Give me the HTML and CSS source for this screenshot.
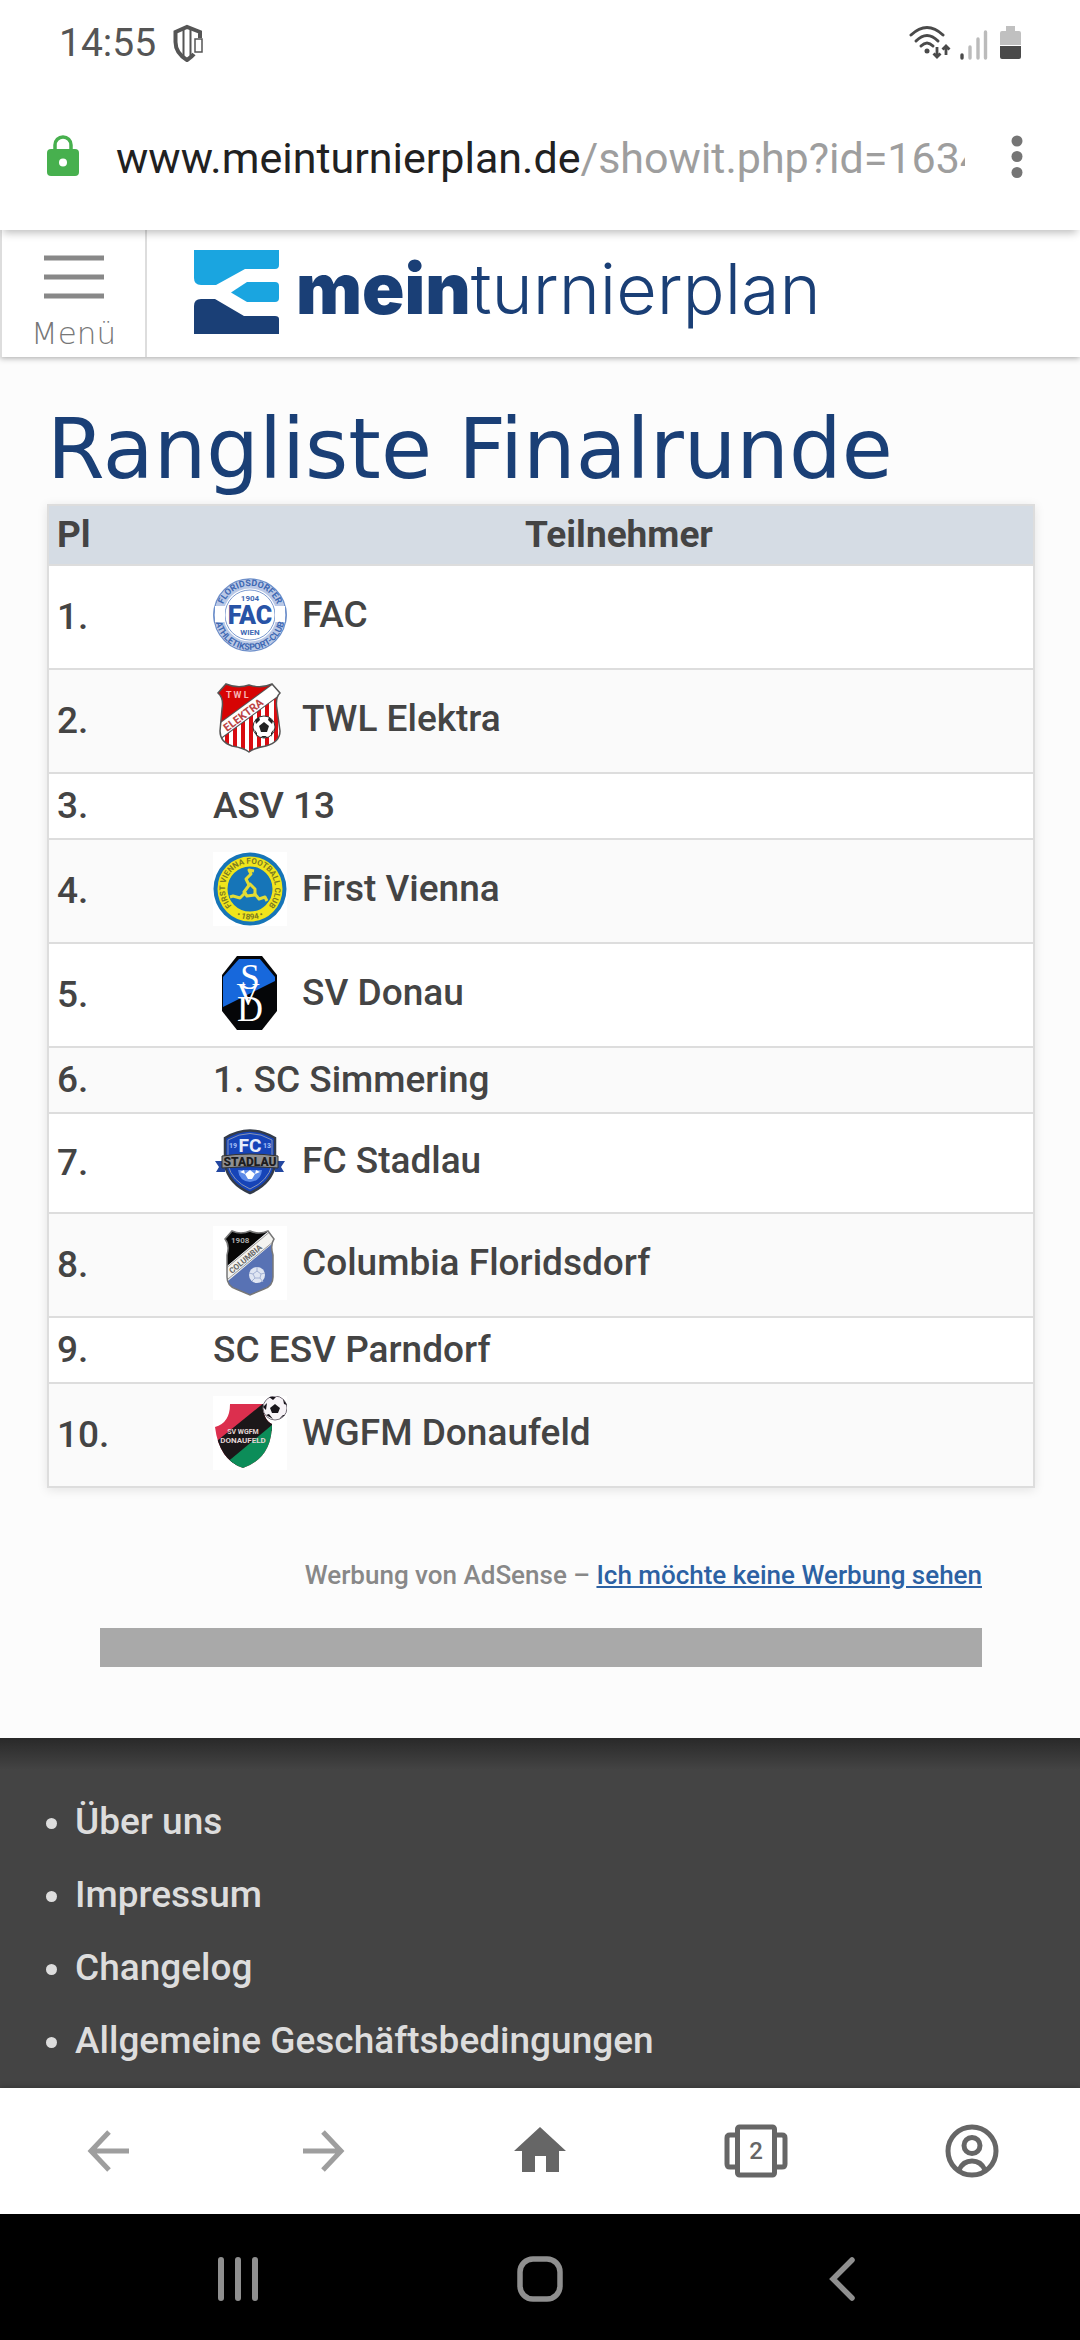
FILE: index.html
```html
<!DOCTYPE html>
<html lang="de">
<head>
    <meta charset="UTF-8">
    <meta name="viewport" content="width=device-width, initial-scale=1.0">
    <title>Rangliste Finalrunde</title>
    <link rel="stylesheet" href="styles.css">
</head>
<body>
    <div class="status-bar">
        <span class="clock">14:55</span>
        <svg class="shield" width="30" height="38" viewBox="0 0 30 38">
            <path d="M27 14V8L14 3 2.500 8v10c0 8 5 14 11.500 18 3-2 5-3.500 7-6" fill="none" stroke="#555" stroke-width="4"/>
            <path d="M10.500 5v28M17.500 5v28" stroke="#555" stroke-width="2"/>
            <rect x="22" y="15" width="7" height="13" fill="#fff" stroke="#555" stroke-width="1.500"/>
        </svg>
        <div class="status-icons">
            <svg width="42" height="36" viewBox="0 0 42 36">
                <g fill="none" stroke="#4a4a4a" stroke-width="3" stroke-linecap="round">
                    <path d="M2 10Q18 -5 34 10"/>
                    <path d="M7 16Q18 5 29 16"/>
                    <path d="M12 21Q18 15 24 21"/>
                </g>
                <circle cx="18" cy="26" r="2.500" fill="#4a4a4a"/>
                <path d="M28 22v10M24.500 28.500 28 32l3.500-3.500M37 30V21M33.500 24.500 37 21l3.500 3.500" fill="none" stroke="#4a4a4a" stroke-width="2.800"/>
            </svg>
            <svg width="28" height="36" viewBox="0 0 28 36">
                <g stroke="#bbb" stroke-width="3.400" stroke-linecap="round">
                    <path d="M2 30v3" stroke="#4a4a4a"/>
                    <path d="M10 22v11M18 14v19M25.500 7v26"/>
                </g>
            </svg>
            <svg class="battery" width="21" height="36" viewBox="0 0 21 36">
                <path d="M6 1h9v5h4q2 0 2 2v12H0V8q0-2 2-2h4z" fill="#c0c0c0"/>
                <path d="M0 21h21v11q0 2-2 2H2q-2 0-2-2z" fill="#4a4a4a"/>
            </svg>
        </div>
    </div>

    <div class="address-bar">
        <svg width="32" height="48" viewBox="0 0 32 48">
            <path d="M8 18V11a8 8 0 0 1 16 0v7" fill="none" stroke="#47b04e" stroke-width="3.500"/>
            <rect x="0" y="15" width="32" height="27" rx="4" fill="#47b04e"/>
            <circle cx="16" cy="28.500" r="4" fill="#fff"/>
        </svg>
        <button class="url" type="button"><span class="host">www.meinturnierplan.de</span>/showit.php?id=1634</button>
        <button class="more" type="button" aria-label="Mehr">
            <svg width="12" height="48" viewBox="0 0 12 48">
                <g fill="#757575">
                    <circle cx="6" cy="7" r="5.500"/>
                    <circle cx="6" cy="22.500" r="5.500"/>
                    <circle cx="6" cy="38.500" r="5.500"/>
                </g>
            </svg>
        </button>
    </div>

    <div class="page">
        <header class="site-header">
            <button class="menu" type="button">
                <svg width="60" height="44" viewBox="0 0 60 44">
                    <path d="M0 3h60M0 22h60M0 41h60" stroke="#888" stroke-width="5"/>
                </svg>
                Menü
            </button>
            <a class="logo" href="#">
                <svg width="85" height="84" viewBox="0 0 85 84">
                    <path d="M0 0h85v15q0 4-4 4H51L22 35H7q-7 0-7-7z" fill="#1aa5e0"/>
                    <path d="M37 42.500 53 32h28q4 0 4 4v12q0 4-4 4H53z" fill="#1aa5e0"/>
                    <path d="M0 56q0-7 7-7h14l29 17h31q4 0 4 3v15H0z" fill="#1a3f76"/>
                </svg>
                <span class="logo-text"><b>mein</b>turnierplan</span>
            </a>
        </header>

        <main class="content">
            <h1>Rangliste Finalrunde</h1>
            <table class="ranking">
                <thead>
                    <tr>
                        <th class="place">Pl</th>
                        <th class="participant">Teilnehmer</th>
                    </tr>
                </thead>
                <tbody>
                    <tr>
                        <td>1.</td>
                        <td>
                            <div class="team">
                                <svg width="74" height="74" viewBox="0 0 74 74">
                                    <defs>
                                        <path id="facTop" d="M8 37a29 29 0 0 1 58 0"/>
                                        <path id="facBottom" d="M2 37a35 35 0 0 0 70 0"/>
                                    </defs>
                                    <circle cx="37" cy="37" r="36" fill="#fff" stroke="#6d8fca" stroke-width="1.500"/>
                                    <circle cx="37" cy="37" r="31" fill="none" stroke="#b9c8e6" stroke-width="9"/>
                                    <circle cx="37" cy="37" r="25" fill="#fff" stroke="#7d9bd0" stroke-width="1"/>
                                    <path d="M2 28h10v16H2zM62 28h10v16H62z" fill="#fff"/>
                                    <path d="M1.500 29a36 36 0 0 0 0 16M72.500 29a36 36 0 0 1 0 16" fill="none" stroke="#6d8fca"/>
                                    <g fill="#3f69b3" font-family="Roboto, sans-serif" font-weight="700" text-anchor="middle">
                                        <text font-size="9"><textPath href="#facTop" startOffset="50%">FLORIDSDORFER</textPath></text>
                                        <text font-size="9"><textPath href="#facBottom" startOffset="50%">ATHLETIKSPORT-CLUB</textPath></text>
                                        <text x="37" y="23" font-size="8">1904</text>
                                        <text x="37" y="57" font-size="8">WIEN</text>
                                        <text x="37" y="46" font-size="25" font-weight="900" fill="#2853a6">FAC</text>
                                    </g>
                                </svg>
                                FAC
                            </div>
                        </td>
                    </tr>
                    <tr>
                        <td>2.</td>
                        <td>
                            <div class="team">
                                <svg width="74" height="74" viewBox="0 0 74 74">
                                    <clipPath id="twl"><path d="M13 2q12 5 23 1 12 4 23-1l8 9q-5 5-3 16l3 22q0 11-14 15-12 2-17 6-5-4-17-6Q7 60 7 49l2-22q2-11-4-16z"/></clipPath>
                                    <g clip-path="url(#twl)">
                                        <path d="M0 0h74v74H0z" fill="#fff"/>
                                        <path d="M14 40v34M22 34v40M30 30v44M38 22v52M46 18v56M54 12v62M63 8v66" stroke="#d90b10" stroke-width="4"/>
                                        <path d="M0 0h64L0 48z" fill="#d60404"/>
                                        <path d="M3 52 68 4" stroke="#555" stroke-width="14"/>
                                        <path d="M3 52 68 4" stroke="#fff" stroke-width="12"/>
                                    </g>
                                    <path d="M13 2q12 5 23 1 12 4 23-1l8 9q-5 5-3 16l3 22q0 11-14 15-12 2-17 6-5-4-17-6Q7 60 7 49l2-22q2-11-4-16z" fill="none" stroke="#555" stroke-width="1.500"/>
                                    <g font-family="Roboto, sans-serif" font-weight="700">
                                        <text x="13" y="16" font-size="9" fill="#f8b5b5">T W L</text>
                                        <text x="14" y="50" font-size="11" fill="#b44" transform="rotate(-37 14 50)">ELEKTRA</text>
                                    </g>
                                    <circle cx="51" cy="45" r="11" fill="#fff" stroke="#333"/>
                                    <path d="m51 40 5 4-2 6h-6l-2-6zM42 38l4-3 1 3-4 4zM56 35l4 4-1 3-4-4zM41 47l3 4v4zM61 47l-3 4v4zM48 54h6l-3 2z" fill="#222"/>
                                </svg>
                                TWL Elektra
                            </div>
                        </td>
                    </tr>
                    <tr>
                        <td>3.</td>
                        <td>ASV 13</td>
                    </tr>
                    <tr>
                        <td>4.</td>
                        <td>
                            <div class="team">
                                <svg width="74" height="74" viewBox="0 0 74 74">
                                    <defs>
                                        <path id="fvcRing" d="M20 55a25 25 0 1 1 34 0"/>
                                        <path id="fvcYear" d="M18 61a31 31 0 0 0 38 0"/>
                                    </defs>
                                    <path d="M0 0h74v74H0z" fill="#fff"/>
                                    <circle cx="37" cy="37" r="36.500" fill="#1675b8"/>
                                    <circle cx="37" cy="37" r="27.500" fill="none" stroke="#f0e51c" stroke-width="10"/>
                                    <g fill="#7c7a22" font-family="Roboto, sans-serif" font-size="8" font-weight="700" text-anchor="middle">
                                        <text><textPath href="#fvcRing" startOffset="50%">FIRST VIENNA FOOTBALL CLUB</textPath></text>
                                        <text><textPath href="#fvcYear" startOffset="50%">• 1894 •</textPath></text>
                                    </g>
                                    <g fill="none" stroke="#e3dc35" stroke-width="3" stroke-linejoin="round">
                                        <path d="M36 33 33 27l5-5-2-4 5 1"/>
                                        <path d="M33 40 27 46l-7-2-3 1"/>
                                        <path d="m41 41 5 6 6-2 2 4"/>
                                        <path d="M37 32l5 5v6l-8 1-3-4z"/>
                                    </g>
                                </svg>
                                First Vienna
                            </div>
                        </td>
                    </tr>
                    <tr>
                        <td>5.</td>
                        <td>
                            <div class="team">
                                <svg width="74" height="74" viewBox="0 0 74 74">
                                    <path d="M24 0h25l15 19v36L49 74H24L9 55V19z" fill="#050608"/>
                                    <path d="M26 3h21l15 18v4L10 51V21z" fill="#1768dc"/>
                                    <g fill="#fff" font-family="Liberation Serif, serif" text-anchor="middle">
                                        <text x="37" y="33" font-size="35">S</text>
                                        <text x="35" y="49" font-size="32">V</text>
                                        <text x="37" y="65" font-size="36">D</text>
                                    </g>
                                </svg>
                                SV Donau
                            </div>
                        </td>
                    </tr>
                    <tr>
                        <td>6.</td>
                        <td>1. SC Simmering</td>
                    </tr>
                    <tr>
                        <td>7.</td>
                        <td>
                            <div class="team">
                                <svg width="74" height="70" viewBox="0 0 74 70">
                                    <path d="M12 12Q37-3 62 12v27Q58 58 37 67 16 58 12 39z" fill="#1644b8" stroke="#333b4a" stroke-width="2.500"/>
                                    <path d="M15 14Q37 1 59 14v25Q55 55 37 63 19 55 15 39z" fill="none" stroke="#8794b5" stroke-width="1"/>
                                    <path d="M2 35h10v11H3l3-5zM72 35H62v11h9l-3-5z" fill="#2347a0"/>
                                    <path d="M25 44h24q-1 11-12 12-11-1-12-12z" fill="#5d8be8"/>
                                    <path d="m37 44 5 4-3 5h-4l-3-5zM27 46l4-2 1 4zM47 46l-4-2-1 4z" fill="#fff"/>
                                    <path d="M9 30q28-4 56 0v12q-28-3-56 0z" fill="#8e8f91" stroke="#333" stroke-width="1"/>
                                    <g font-family="Roboto, sans-serif" font-weight="900" text-anchor="middle">
                                        <text x="37" y="40" font-size="12" fill="#1d1d1f">STADLAU</text>
                                        <text x="37" y="26" font-size="19" font-weight="700" fill="#e8eefc">FC</text>
                                        <text x="20" y="22" font-size="7" fill="#9db8f2">19</text>
                                        <text x="54" y="22" font-size="7" fill="#9db8f2">13</text>
                                    </g>
                                </svg>
                                FC Stadlau
                            </div>
                        </td>
                    </tr>
                    <tr>
                        <td>8.</td>
                        <td>
                            <div class="team">
                                <svg width="74" height="74" viewBox="0 0 74 74">
                                    <path d="M0 0h74v74H0z" fill="#fff"/>
                                    <clipPath id="columbia"><path d="M19 5q9 4 18 0 9 4 18 0l6 8q-4 6-1 16v22q0 9-9 12l-14 6-14-6q-9-3-9-12V29q3-10-2-16z"/></clipPath>
                                    <g clip-path="url(#columbia)">
                                        <path d="M0 0h74v74H0z" fill="#5872b4"/>
                                        <path d="M0 0h62L0 52z" fill="#070707"/>
                                        <path d="M8 53 65 5" stroke="#f3f3f0" stroke-width="12"/>
                                        <path d="M11 44 59 4M15 53 66 11" stroke="#9a9a9a" stroke-width="1"/>
                                    </g>
                                    <path d="M19 5q9 4 18 0 9 4 18 0l6 8q-4 6-1 16v22q0 9-9 12l-14 6-14-6q-9-3-9-12V29q3-10-2-16z" fill="none" stroke="#777" stroke-width="1.500"/>
                                    <g font-family="Roboto, sans-serif" font-weight="700">
                                        <text x="18" y="17" font-size="8" fill="#aaa">1908</text>
                                        <text x="19" y="48" font-size="8" fill="#666" transform="rotate(-40 19 48)">COLUMBIA</text>
                                    </g>
                                    <circle cx="44" cy="49" r="8" fill="#dfe5f2"/>
                                    <path d="m44 45 4 3-1 4h-5l-2-4zM44 41v4M52 47l-4 1M50 56l-3-4M39 55l3-3M36 47l4 1" fill="none" stroke="#a4b2d4"/>
                                </svg>
                                Columbia Floridsdorf
                            </div>
                        </td>
                    </tr>
                    <tr>
                        <td>9.</td>
                        <td>SC ESV Parndorf</td>
                    </tr>
                    <tr>
                        <td>10.</td>
                        <td>
                            <div class="team">
                                <svg width="74" height="74" viewBox="0 0 74 74">
                                    <path d="M0 0h74v74H0z" fill="#fff"/>
                                    <clipPath id="wgfm"><path d="M17 8h33q0 16 9 20 0 34-29 44Q6 64 2 31q15-4 15-23z"/></clipPath>
                                    <g clip-path="url(#wgfm)">
                                        <path d="M0 0h74v74H0z" fill="#dc2f4e"/>
                                        <path d="M52 6 0 48v26h20l45-46V6z" fill="#1b1719"/>
                                        <path d="M65 24 12 68l10 6h43z" fill="#0c8d59"/>
                                    </g>
                                    <g fill="#e2d5d5" font-family="Roboto, sans-serif" font-weight="700" text-anchor="middle">
                                        <text x="30" y="38" font-size="7">SV WGFM</text>
                                        <text x="30" y="47" font-size="8">DONAUFELD</text>
                                    </g>
                                    <circle cx="62" cy="12" r="12" fill="#f7f3f7" stroke="#77707a"/>
                                    <path d="m62 8 5 4-2 5h-6l-2-5zM56 1h7l-3 3zM50 11l4-4-1 7zM53 19l3-1 4 5zM66 23l4-4h2zM70 3l4 6-3-1z" fill="#17131a"/>
                                </svg>
                                WGFM Donaufeld
                            </div>
                        </td>
                    </tr>
                </tbody>
            </table>

            <div class="ad">
                <p>Werbung von AdSense – <a href="#">Ich möchte keine Werbung sehen</a></p>
                <div class="ad-space"></div>
            </div>
        </main>

        <footer class="site-footer">
            <ul>
                <li><a href="#">Über uns</a></li>
                <li><a href="#">Impressum</a></li>
                <li><a href="#">Changelog</a></li>
                <li><a href="#">Allgemeine Geschäftsbedingungen</a></li>
            </ul>
        </footer>
    </div>

    <nav class="browser-nav">
        <button type="button" aria-label="Zurück">
            <svg width="64" height="54" viewBox="0 0 64 54">
                <path d="M53 27H15M33 8 15 27l18 19" fill="none" stroke="#9e9e9e" stroke-width="5"/>
            </svg>
        </button>
        <button type="button" aria-label="Vorwärts">
            <svg width="64" height="54" viewBox="0 0 64 54">
                <path d="M11 27h38M31 8l18 19-18 19" fill="none" stroke="#9e9e9e" stroke-width="5"/>
            </svg>
        </button>
        <button type="button" aria-label="Startseite">
            <svg width="64" height="54" viewBox="0 0 64 54">
                <path d="M32 3 6 27h8v21h13V32h11v16h13V27h7z" fill="#666"/>
            </svg>
        </button>
        <button type="button" aria-label="Tabs">
            <svg width="64" height="54" viewBox="0 0 64 54">
                <g fill="none" stroke="#666" stroke-width="5">
                    <path d="M12 11H6q-3 0-3 3v26q0 3 3 3h6M52 11h6q3 0 3 3v26q0 3-3 3h-6"/>
                    <rect x="13.500" y="3" width="37" height="48" rx="2"/>
                </g>
                <text x="32" y="35" font-family="Roboto, sans-serif" font-size="24" text-anchor="middle" fill="#666">2</text>
            </svg>
        </button>
        <button type="button" aria-label="Konto">
            <svg width="64" height="54" viewBox="0 0 64 54">
                <g fill="none" stroke="#666" stroke-width="5">
                    <circle cx="32" cy="27" r="24"/>
                    <circle cx="32" cy="21.500" r="8"/>
                    <path d="M19 46q4-9 13-9t13 9"/>
                </g>
            </svg>
        </button>
    </nav>

    <nav class="system-nav">
        <button type="button" aria-label="Letzte Apps">
            <svg width="48" height="48" viewBox="0 0 48 48">
                <path d="M7 5v38M24 5v38M41 5v38" stroke="#8f8f8f" stroke-width="6" stroke-linecap="round"/>
            </svg>
        </button>
        <button type="button" aria-label="Home">
            <svg width="48" height="48" viewBox="0 0 48 48">
                <rect x="4" y="4" width="40" height="40" rx="13" fill="none" stroke="#8f8f8f" stroke-width="5.500"/>
            </svg>
        </button>
        <button type="button" aria-label="Zurück">
            <svg width="48" height="48" viewBox="0 0 48 48">
                <path d="M34 5 15 24l19 19" fill="none" stroke="#8f8f8f" stroke-width="5.500" stroke-linecap="round"/>
            </svg>
        </button>
    </nav>
</body>
</html>
```
FILE: styles.css
```css
* {
    box-sizing: border-box;
}
body {
    margin: 0;
    height: 100vh;
    display: flex;
    flex-direction: column;
    font-family: Roboto, sans-serif;
    font-size: 37px;
    font-weight: 500;
    line-height: 42px;
    color: #444;
    background-color: #fff;
}
button {
    padding: 0;
    border: none;
    background: none;
    font: inherit;
    color: inherit;
    cursor: pointer;
}
svg {
    display: block;
    flex: none;
}

/* phone status bar */
.status-bar {
    display: flex;
    align-items: center;
    padding: 22px 59px;
    font-size: 39px;
    font-weight: 400;
    color: #555;
}
.shield {
    margin-left: 17px;
}
.status-icons {
    display: flex;
    gap: 9px;
    margin-left: auto;
}
.battery {
    margin-left: 3px;
}

/* browser address bar */
.address-bar {
    position: relative;
    display: flex;
    align-items: center;
    padding: 48px 57px 48px 47px;
    box-shadow: 0 6px 8px -3px rgba(0, 0, 0, 0.25);
}
.url {
    flex: 1;
    min-width: 0;
    height: 48px;
    margin: 0 46px 0 37px;
    overflow: hidden;
    white-space: nowrap;
    text-align: left;
    font-size: 43px;
    font-weight: 400;
    line-height: 48px;
    color: #9e9e9e;
}
.host {
    color: #212121;
}

/* web page */
.page {
    flex: 1;
    min-height: 0;
    overflow: hidden;
    background-color: #fcfcfc;
}
.site-header {
    display: flex;
    background-color: #fff;
    box-shadow: 0 1px 6px rgba(0, 0, 0, 0.35);
}
.menu {
    display: flex;
    flex-direction: column;
    align-items: center;
    gap: 16px;
    width: 147px;
    padding: 25px 0 6px;
    border: solid #ddd;
    border-width: 0 2px;
    font-family: "DejaVu Sans", sans-serif;
    font-size: 31px;
    font-weight: 200;
    line-height: 36px;
    color: #777;
}
.logo {
    display: flex;
    align-items: center;
    gap: 17px;
    margin-left: 47px;
    padding-bottom: 4px;
    color: #1a3f76;
    text-decoration: none;
}
.logo-text {
    padding-bottom: 6px;
    font-family: Inter, sans-serif;
    font-size: 70px;
    font-weight: 300;
    line-height: 80px;
}
.logo-text b {
    font-weight: 900;
}
.content {
    padding: 45px 45px 71px 47px;
}
h1 {
    margin: 0 0 6px;
    font-family: "DejaVu Sans", sans-serif;
    font-size: 83px;
    font-weight: 400;
    line-height: 96px;
    color: #1a3f76;
}
.ranking {
    width: 100%;
    border: 2px solid #ddd;
    border-spacing: 0;
    background-color: #fff;
    box-shadow: 0 2px 10px rgba(0, 0, 0, 0.1);
}
.ranking th {
    padding: 8px;
    border-bottom: 2px solid #ddd;
    background-color: #d5dce4;
    font-weight: 700;
}
.ranking .place {
    width: 156px;
    text-align: left;
}
.ranking td {
    padding: 11px 8px;
    border-bottom: 2px solid #ddd;
}
.ranking tr:last-child td {
    border-bottom: none;
}
.ranking tbody tr:nth-child(even) {
    background-color: #fafafa;
}
.team {
    display: flex;
    align-items: center;
    gap: 15px;
    padding: 1px 0 5px;
}
.ad {
    padding: 70px 53px 0;
    font-size: 26px;
    line-height: 34px;
    text-align: right;
    color: #888;
}
.ad p {
    margin: 0 0 36px;
}
.ad a {
    color: #2c61a3;
}
.ad-space {
    height: 39px;
    background-color: #a9a9a9;
}
.site-footer {
    padding: 47px 40px;
    background: #444 linear-gradient(#292929, #444 32px);
    color: #ddd;
}
.site-footer ul {
    margin: 0;
    padding-left: 35px;
}
.site-footer li {
    line-height: 73px;
}
.site-footer a {
    color: #ddd;
    text-decoration: none;
}

/* browser buttons */
.browser-nav {
    position: relative;
    display: flex;
    background-color: #fff;
    box-shadow: 0 0 6px rgba(0, 0, 0, 0.3);
}
.browser-nav button {
    flex: 1;
    display: flex;
    justify-content: center;
    padding: 36px 0;
}

/* phone buttons */
.system-nav {
    position: relative;
    display: flex;
    padding: 0 8%;
    background-color: #000;
}
.system-nav button {
    flex: 1;
    display: flex;
    justify-content: center;
    padding: 41px 0 37px;
}
```
